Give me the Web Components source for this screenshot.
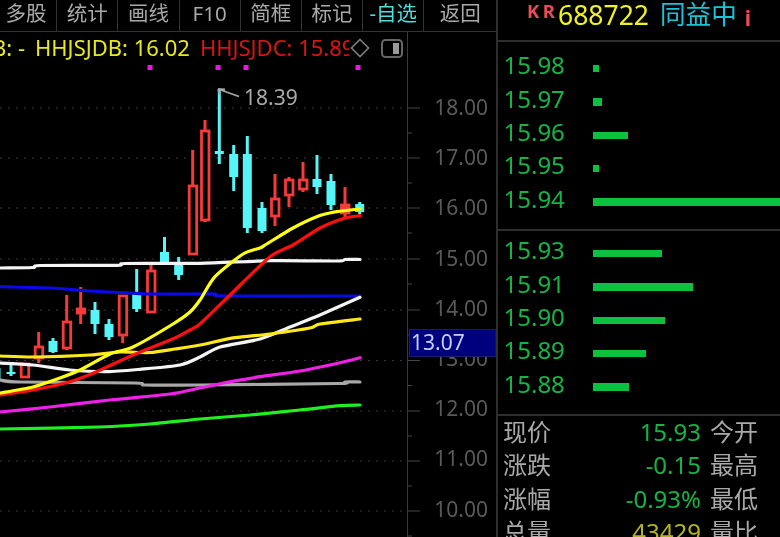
<!DOCTYPE html>
<html lang="zh"><head><meta charset="utf-8"><title>688722</title>
<style>
html,body{margin:0;background:#000;height:100%;overflow:hidden}
body{font-family:"Noto Sans","Noto Sans CJK SC",sans-serif}
</style></head><body>
<x-app></x-app>
<script>
const FONT='"Noto Sans","Noto Sans CJK SC",sans-serif';
class XApp extends HTMLElement{constructor(){super();this.attachShadow({mode:'open'}).innerHTML=`
<style>:host{display:flex;width:780px;height:537px;overflow:hidden;background:#000;font-family:${FONT};filter:blur(.35px)}
.l{width:496px;flex:none;display:flex;flex-direction:column;border-right:2px solid #2e2e2e;box-sizing:content-box;overflow:hidden}
x-quote{flex:1;min-width:0}</style>
<div class="l"><x-toolbar></x-toolbar><x-chart></x-chart></div><x-quote></x-quote>`}}
class XToolbar extends HTMLElement{constructor(){super();
const t=[['多股'],['统计'],['画线'],['F10'],['简框'],['标记'],['-自选',1],['返回']];
this.attachShadow({mode:'open'}).innerHTML=`
<style>:host{display:flex;height:31px;flex:none;border-bottom:1px solid #333;margin-left:-4px}
span{flex:none;width:60.2px;height:31px;line-height:27px;border-right:1px solid #333;text-align:center;color:#a9a9a9;font-size:20.5px;white-space:nowrap}
span.c{color:#4fdede}span:last-child{width:72px;border-right:0}</style>
${t.map(x=>`<span class="${x[1]?'c':''}">${x[0]}</span>`).join('')}`}}
function smooth(p){let d=`M${p[0][0]} ${p[0][1]}`;const k=.12;
 for(let i=0;i<p.length-1;i++){const a=p[i-1]||p[i],b=p[i],c=p[i+1],e=p[i+2]||c;
  d+=`C${(b[0]+(c[0]-a[0])*k).toFixed(1)} ${(b[1]+(c[1]-a[1])*k).toFixed(1)} ${(c[0]-(e[0]-b[0])*k).toFixed(1)} ${(c[1]-(e[1]-b[1])*k).toFixed(1)} ${c[0]} ${c[1]}`}
 return d}
class XChart extends HTMLElement{constructor(){super();
const candles=[
[-4,'c',365,382,368,380],[11,'c',365,376,372,374],[24.7,'r',363,378,364,377],[38.7,'r',332,363,347,358],[53,'c',338,353,341,352],[66.7,'r',295,350,322,348],[80.7,'r',287,324,309,313],[95,'c',302,334,310,324],[109,'c',319,340,324,337],[122.7,'r',295,343,296,335],[136.7,'c',269,312,294,309],[151,'r',262,313,271,312],[164.5,'c',237,262,252,262],[178.7,'c',257,280,265,275],[192.7,'r',150,255,186,254],[205,'r',120,222,131,220],[219.3,'c',90,164,151,154],[233.7,'c',145,191,154,177],[247.3,'c',136,233,154,228],[262,'c',202,233,208,231],[275,'r',174,226,199,216],[289,'r',177,207,180,195],[303,'r',162,192,180,189],[317,'c',155,194,179,187],[331,'c',174,210,181,205],[345,'r',187,218,205,213],[359.7,'c',202,214,204,212]];
let c='';
for(const [x,k,a,b,t,u] of candles){
 if(k==='c'){c+=`<path d="M${x} ${a}V${b}" stroke="#55f5f8" stroke-width="3"/><rect x="${x-4.5}" y="${t}" width="9" height="${u-t}" fill="#55f5f8"/>`}
 else{c+=`<path d="M${x} ${a}V${t}M${x} ${u}V${b}" stroke="#f53a3a" stroke-width="3"/><rect x="${x-3.5}" y="${t}" width="7.5" height="${u-t}" fill="${u-t<9?'#f53a3a':'#000'}" stroke="#f53a3a" stroke-width="2.8"/>`}
}
const lines=[
['#f4f4f4',[[0,268],[33,267.5],[40,265.5],[117,265.3],[125,263.5],[200,263.3],[270,260.7],[338,261],[345,259.5],[360,259.5]]],
['#0a0ae6',[[0,286.7],[50,288],[90,291],[130,293],[150,294],[200,294],[215,294],[225,296],[360,296]]],
['#a8a8a8',[[0,380],[20,382],[135,383],[145,385],[200,385],[338,383.5],[345,382],[360,382]]],
['#f020e8',[[0,412],[50,407],[110,400],[170,394],[200,388],[230,381.7],[260,376.7],[300,371],[340,362.7],[360,357.7]]],
['#20f020',[[0,429],[100,427],[150,424],[200,419],[250,415],[300,410],[340,405.7],[360,405]]],
['#f4f4f4',[[0,363],[33,365],[70,370],[107,371.7],[140,369.3],[180,365],[200,357],[220,347],[260,339],[290,327],[320,315],[360,297.3]]],
['#ffe81a',[[0,356],[33,357],[90,355],[120,352],[150,352.5],[175,349],[200,345],[235,337.7],[270,334],[310,328],[320,324],[360,319]]],
['#ff0e0e',[[0,395],[33,390],[70,381.7],[93,373.3],[133,355],[175,338],[190,330],[200,324],[230,295],[270,256.7],[293,245],[320,228],[345,218],[360,215.7]]],
['#ffff10',[[0,393],[33,387],[60,378],[80,370],[110,354],[133,347],[173,324],[190,312],[200,300],[215,276.7],[243,254],[260,248],[266.7,244],[293,228],[316.7,216.7],[336.7,211.7],[360,209]]]
];
const l=lines.map(([s,p])=>`<path d="${smooth(p)}" fill="none" stroke="${s}" stroke-width="3.2" stroke-linejoin="round" stroke-linecap="round"/>`).join('');
let g='',ax='';
const ys=[108,158,208,259,310,360.5,411,461,511],lb=['18.00','17.00','16.00','15.00','14.00','13.00','12.00','11.00','10.00'];
ys.forEach((y,i)=>{g+=`<path d="M0 ${y}H408" stroke="#3a3a3a" stroke-width="1" stroke-dasharray="2 6"/>`;
 ax+=`<path d="M408 ${y}H420M408 ${y+25}H412" stroke="#444"/><text x="488" y="${(107.5+50.2*i+7.5).toFixed(1)}" text-anchor="end" fill="#5a5a5a" font-size="21">${lb[i]}</text>`;});
const dots=[150,218,246,358].map(x=>`<rect x="${x-2.5}" y="65" width="5" height="5" fill="#f010f0"/>`).join('');
this.attachShadow({mode:'open'}).innerHTML=`
<style>:host{display:block;position:relative;flex:1;min-height:0;overflow:hidden;font-family:${FONT}}
svg{display:block;position:absolute;left:0;top:0;font-family:${FONT}}
.lg{position:absolute;left:0;top:0;width:349px;height:30px;overflow:hidden;display:flex;gap:10px;align-items:center;font-size:22px;white-space:nowrap}
.y{color:#e8e81e;margin-left:-8px}.y2{color:#e8e81e}.r{color:#d81414}
.tools{position:absolute;left:350px;top:6px;display:flex;gap:11px;align-items:flex-start}
.tools svg{position:static}</style>
<svg width="496" height="505" viewBox="0 32 496 505">
<path d="M407.500 32V537" stroke="#3a3a3a"/>${g}${ax}${dots}${c}${l}
<path d="M239 96.500L218 89M218 89L225 89.500M218 89L220 95" fill="none" stroke="#a8a8a8" stroke-width="1.800"/>
<text x="244" y="105" fill="#a8a8a8" font-size="21">18.39</text>
<rect x="409.500" y="329.500" width="86.500" height="27" fill="#00007e" stroke="#1c1c6e"/>
<text x="411" y="350" fill="#c4d0ff" font-size="21">13.07</text>
</svg>
<div class="lg"><span class="y">B: -</span><span class="y2">HHJSJDB: 16.02</span><span class="r">HHJSJDC: 15.89</span></div>
<div class="tools">
<svg width="20" height="20" viewBox="0 0 20 20"><path d="M10 1.500L18.500 10L10 18.500L1.500 10Z" fill="none" stroke="#7c7c7c" stroke-width="1.700"/></svg>
<svg width="22" height="19" style="margin-top:1px" viewBox="0 0 22 19"><rect x="1" y="1" width="20" height="17" rx="3.500" fill="none" stroke="#666" stroke-width="2"/><rect x="12" y="4" width="6" height="11" fill="#9a9a9a"/></svg>
</div>`}}
class XQuote extends HTMLElement{constructor(){super();
const a=[['15.98',6],['15.97',9],['15.96',35],['15.95',6],['15.94',187]];
const b=[['15.93',69],['15.91',100],['15.90',72],['15.89',53],['15.88',36]];
const row=([p,w])=>`<x-order price="${p}" w="${w}"></x-order>`;
this.attachShadow({mode:'open'}).innerHTML=`
<style>:host{display:block;height:537px;overflow:hidden;font-family:${FONT}}
header{height:40px;border-bottom:2px solid #2e2e2e;display:flex;align-items:flex-start;padding-left:29px;white-space:nowrap}
.kr{color:#ec4c58;font-size:18.500px;font-weight:700;letter-spacing:3.500px;line-height:20px;width:31px;flex:none;margin-top:1px}
.code{color:#f2f21e;font-size:26.500px;line-height:30px}
.nm{color:#18c4d8;font-size:25.600px;line-height:30px;margin-left:11px}
.i{color:#ec4c58;font-size:21px;font-weight:700;line-height:30px;margin-left:8px;margin-top:3px}
.s1{padding-top:6px;height:181px;border-bottom:2px solid #2e2e2e}
.s2{padding-top:2px;height:181px;border-bottom:2px solid #2e2e2e}
</style>
<header><span class="kr">KR</span><span class="code">688722</span><span class="nm">同益中</span><span class="i">i</span></header>
<div class="s1">${a.map(row).join('')}</div>
<div class="s2">${b.map(row).join('')}</div>
<x-info l="现价" v="15.93" k="今开"></x-info>
<x-info l="涨跌" v="-0.15" k="最高"></x-info>
<x-info l="涨幅" v="-0.93%" k="最低"></x-info>
<x-info l="总量" v="43429" k="量比" c="#b4b41e"></x-info>`}}
class XOrder extends HTMLElement{constructor(){super();this.attachShadow({mode:'open'})}
connectedCallback(){this.shadowRoot.innerHTML=`
<style>:host{display:flex;height:33.400px;align-items:center;padding-left:5.500px}
b{font-weight:400;color:#14b446;font-size:24px;width:89.500px;flex:none;line-height:33px}
i{display:block;height:7.500px;background:#0cc040;margin-top:7.600px}</style>
<b>${this.getAttribute('price')}</b><i style="width:${this.getAttribute('w')}px"></i>`}}
class XInfo extends HTMLElement{constructor(){super();this.attachShadow({mode:'open'})}
connectedCallback(){this.shadowRoot.innerHTML=`
<style>:host{display:grid;grid-template-columns:53px 145px 70px;height:33.300px;align-items:start;padding-left:5px;font-size:24px;white-space:nowrap;line-height:31.500px}
.a{color:#a9a9a9}.v{text-align:right;color:${this.getAttribute('c')||'#14b446'}}.k{color:#a9a9a9;padding-left:9px}</style>
<span class="a">${this.getAttribute('l')}</span><span class="v">${this.getAttribute('v')}</span><span class="k">${this.getAttribute('k')}</span>`}}
customElements.define('x-toolbar',XToolbar);customElements.define('x-chart',XChart);customElements.define('x-order',XOrder);customElements.define('x-info',XInfo);customElements.define('x-quote',XQuote);customElements.define('x-app',XApp);
</script></body></html>
